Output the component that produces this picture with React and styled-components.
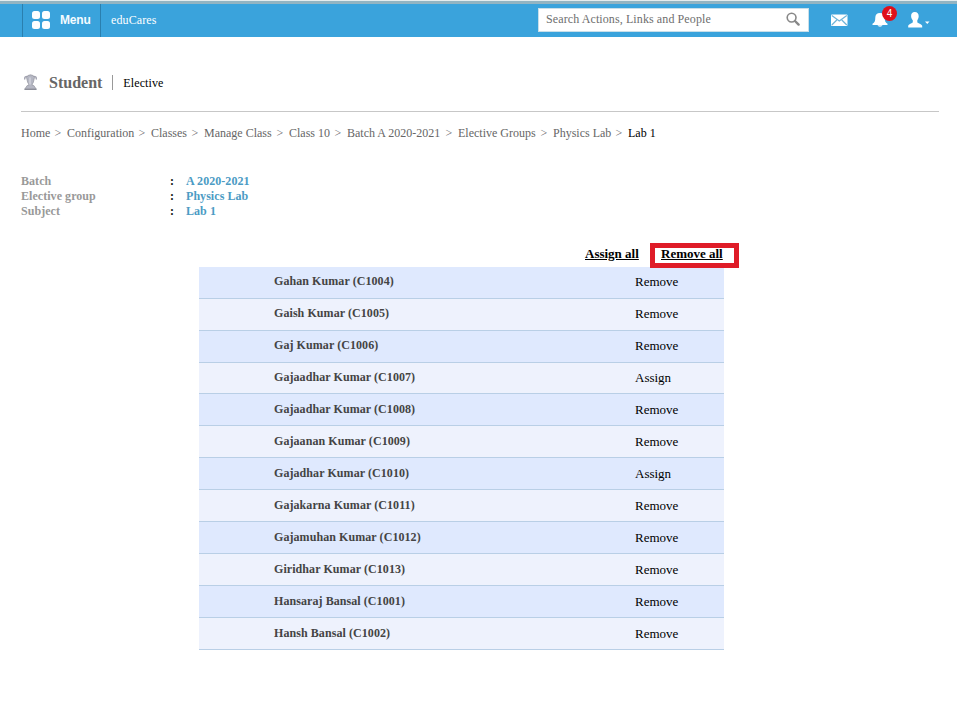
import React from "react";
import styled, { createGlobalStyle } from "styled-components";

const Global = createGlobalStyle`
  * { box-sizing: border-box; }
  body { margin: 0; background: #fff; font: 12px/15px "Liberation Serif", "Times New Roman", serif; color: #111; }
  a { color: inherit; text-decoration: none; }
`;
const Page = styled.div`height: 725px; overflow: hidden;`;
const Header = styled.header`
  height: 37px; display: flex; align-items: stretch; padding: 4px 27px 0 22px;
  background: #3aa3dc; border-top: 1px solid #e4ecee; box-shadow: inset 0 3px 0 #92b4c2;
`;
const MenuButton = styled.button`
  width: 79px; margin: -1px 0 0; padding: 0 0 1px 9px; display: flex; align-items: center; gap: 10px;
  border: 0; border-left: 1px solid #2a7fae; border-right: 1px solid #2a7fae; background: none;
  color: #f4fbff; font: bold 12px "Liberation Sans", Arial, sans-serif; letter-spacing: -0.2px;
`;
const Brand = styled.a`margin: 8px auto 0 10px; color: #fff; letter-spacing: 0.1px;`;
const Search = styled.div`
  width: 271px; height: 24px; margin: 3px 22px 0 0; padding: 0 8px 2px 7px; display: flex; align-items: center;
  justify-content: space-between; background: #fff; border: 1px solid #c9dfe9; color: #6e6e6e; letter-spacing: 0.1px;
`;
const Tool = styled.a`position: relative; display: block; height: 20px; margin: 4px ${p => p.$gap}px 0 0; line-height: 0;`;
const Badge = styled.span`
  position: absolute; left: 10px; top: -3px; width: 15px; height: 15px; border-radius: 50%; background: #df101b;
  color: #fff; font: 10px/15px "Liberation Sans", Arial, sans-serif; text-align: center;
`;
const Title = styled.div`
  height: 75px; margin: 0 18px 0 21px; padding: 36px 0 0 2px; display: flex; align-items: flex-start; border-bottom: 1px solid #c7c7c7;
`;
const TrophySlot = styled.span`height: 17px; margin-top: 1px; line-height: 0;`;
const Heading = styled.h1`margin: 0 10px 0 11px; font-size: 16px; line-height: 19px; color: #666;`;
const Section = styled.span`
  height: 15px; margin-top: 2px; padding-left: 10px; border-left: 1px solid #999; color: #000; line-height: 17px; letter-spacing: 0.1px;
`;
const Crumbs = styled.nav`display: flex; margin: 13px 0 0 21px; color: #666; line-height: 16px;`;
const Crumb = styled.a`width: ${p => p.$w}px; white-space: nowrap; color: ${p => (p.$current ? "#000" : "#666")};`;
const Arrow = styled.span`width: 16px; padding-right: 2px; text-align: center;`;
const Details = styled.dl`
  display: grid; grid-template-columns: 149px 16px 1fr; grid-auto-rows: 15px; margin: 33px 0 0 21px; font-weight: bold; letter-spacing: 0.05px;
`;
const Term = styled.dt`color: #999;`;
const Colon = styled.span`color: #111;`;
const Value = styled.dd`margin: 0; color: #4b9bc4;`;
const Bulk = styled.div`display: flex; justify-content: flex-end; height: 24px; width: 739px; margin-top: 24px;`;
const BulkLink = styled.a`
  position: relative; z-index: 1; height: 25px; font: bold 13px/11px "Liberation Serif", "Times New Roman", serif;
  color: #000; text-decoration: underline; white-space: nowrap;
  border: 5px solid ${p => (p.$marked ? "#df1c28" : "transparent")};
  padding-left: 6px; width: ${p => (p.$marked ? 89 : 76)}px;
`;
const List = styled.div`width: 525px; margin-left: 199px;`;
const Row = styled.div`
  height: 32px; display: grid; grid-template-columns: 361px 1fr; padding-left: 75px; border-bottom: 1px solid #b9cfe6;
  background: #eef2fd;
  &:nth-child(odd) { background: #dfe9fe; }
  &:nth-child(4) { height: 31px; }
  &:nth-child(n + 5) > * { position: static; padding-top: 8px; }
`;
const Name = styled.span`padding-top: 7px; font-weight: bold; color: #444; letter-spacing: 0.07px;`;
const Action = styled.a`padding-top: 7px; font-size: 13px; color: #000;`;

const crumbs = [["Home", 30], ["Configuration", 68], ["Classes", 37], ["Manage Class", 69], ["Class 10", 42],
  ["Batch A 2020-2021", 95], ["Elective Groups", 79], ["Physics Lab", 59]];
const students = [
  ["Gahan Kumar (C1004)", 1], ["Gaish Kumar (C1005)", 1], ["Gaj Kumar (C1006)", 1], ["Gajaadhar Kumar (C1007)", 0],
  ["Gajaadhar Kumar (C1008)", 1], ["Gajaanan Kumar (C1009)", 1], ["Gajadhar Kumar (C1010)", 0], ["Gajakarna Kumar (C1011)", 1],
  ["Gajamuhan Kumar (C1012)", 1], ["Giridhar Kumar (C1013)", 1], ["Hansaraj Bansal (C1001)", 1], ["Hansh Bansal (C1002)", 1],
];

const GridIcon = () => (
  <svg width="18" height="18" viewBox="0 0 18 18" fill="#fff">
    <rect width="8" height="8" rx="2.5" /><rect x="10" width="8" height="8" rx="2.5" />
    <rect y="10" width="8" height="8" rx="2.5" /><rect x="10" y="10" width="8" height="8" rx="2.5" />
  </svg>
);
const SearchIcon = () => (
  <svg width="14" height="14" viewBox="0 0 14 14" fill="none" stroke="#888">
    <circle cx="5.6" cy="5.6" r="4.4" strokeWidth="1.6" /><path d="M9 9l3.6 3.6" strokeWidth="2.4" strokeLinecap="round" />
  </svg>
);
const MailIcon = () => (
  <svg width="17" height="20" viewBox="0 0 17 20">
    <rect y="5.500" width="16.500" height="11.500" rx="1" fill="#fff" />
    <path d="M.8 6.500l7.500 5.500 7.500-5.500M.8 16l5-5M15.800 16l-5-5" fill="none" stroke="#6fb4d8" strokeWidth="1.2" />
  </svg>
);
const BellIcon = () => (
  <svg width="16" height="20" viewBox="0 0 16 20" fill="#fff">
    <path d="M8 4C4.800 4 3.300 6 3.300 8.500c0 3.500-.6 4.800-2.800 6.200V16h15v-1.300c-2.200-1.400-2.800-2.700-2.800-6.200C12.700 6 11.200 4 8 4zM5.500 16.300h5c-.5 1.900-4.500 1.900-5 0z" />
  </svg>
);
const UserIcon = () => (
  <svg width="22" height="20" viewBox="0 0 22 20" fill="#fff">
    <path d="M6.800 3C4.200 3 3 4.700 3.100 7.200c.1 1.900.8 3.100 1.700 4v2C4 14.600.6 14.800.2 16.800V18.500h14v-1.700c-.4-2-4.100-2.200-4.900-3.600v-2c.7-.9 1.300-2.100 1.400-4C10.700 4.700 9.400 3 6.800 3z" />
    <path d="M17 12.500h4.500L19.250 15z" />
  </svg>
);
const TrophyIcon = () => (
  <svg width="15" height="17" viewBox="0 0 15 17">
    <path d="M5 2.500C2.200 2.200 1.400 3.200 1.800 5.500M10 2.500c2.800-.3 3.600.7 3.200 3" fill="none" stroke="#a3a4b1" strokeWidth="1.500" />
    <path d="M5 1.500L7.500.8l2.500.7 1.500 2-1.200 5L9.300 10v1.500h1.500l2.500 3.700H1.700l2.500-3.700h1.500V10L4.700 8.500l-1.200-5z" fill="#b5b7c3" stroke="#94959f" strokeWidth=".7" />
    <path d="M1.500 15.300h12" stroke="#80828e" />
    <path d="M7 3.500v7" stroke="#e1e2e9" />
  </svg>
);

export default function App() {
  return (
    <Page>
      <Global />
      <Header>
        <MenuButton><GridIcon />Menu</MenuButton>
        <Brand>eduCares</Brand>
        <Search><span>Search Actions, Links and People</span><SearchIcon /></Search>
        <Tool $gap={24}><MailIcon /></Tool>
        <Tool $gap={20}><BellIcon /><Badge>4</Badge></Tool>
        <Tool $gap={0}><UserIcon /></Tool>
      </Header>
      <Title><TrophySlot><TrophyIcon /></TrophySlot><Heading>Student</Heading><Section>Elective</Section></Title>
      <Crumbs>
        {crumbs.map(([label, w]) => (
          <React.Fragment key={label}><Crumb $w={w}>{label}</Crumb><Arrow>&gt;</Arrow></React.Fragment>
        ))}
        <Crumb $w={29} $current>Lab 1</Crumb>
      </Crumbs>
      <Details>
        <Term>Batch</Term><Colon>:</Colon><Value>A 2020-2021</Value>
        <Term>Elective group</Term><Colon>:</Colon><Value>Physics Lab</Value>
        <Term>Subject</Term><Colon>:</Colon><Value>Lab 1</Value>
      </Details>
      <Bulk><BulkLink>Assign all</BulkLink><BulkLink $marked>Remove all</BulkLink></Bulk>
      <List>
        {students.map(([name, assigned]) => (
          <Row key={name}><Name>{name}</Name><Action>{assigned ? "Remove" : "Assign"}</Action></Row>
        ))}
      </List>
    </Page>
  );
}
